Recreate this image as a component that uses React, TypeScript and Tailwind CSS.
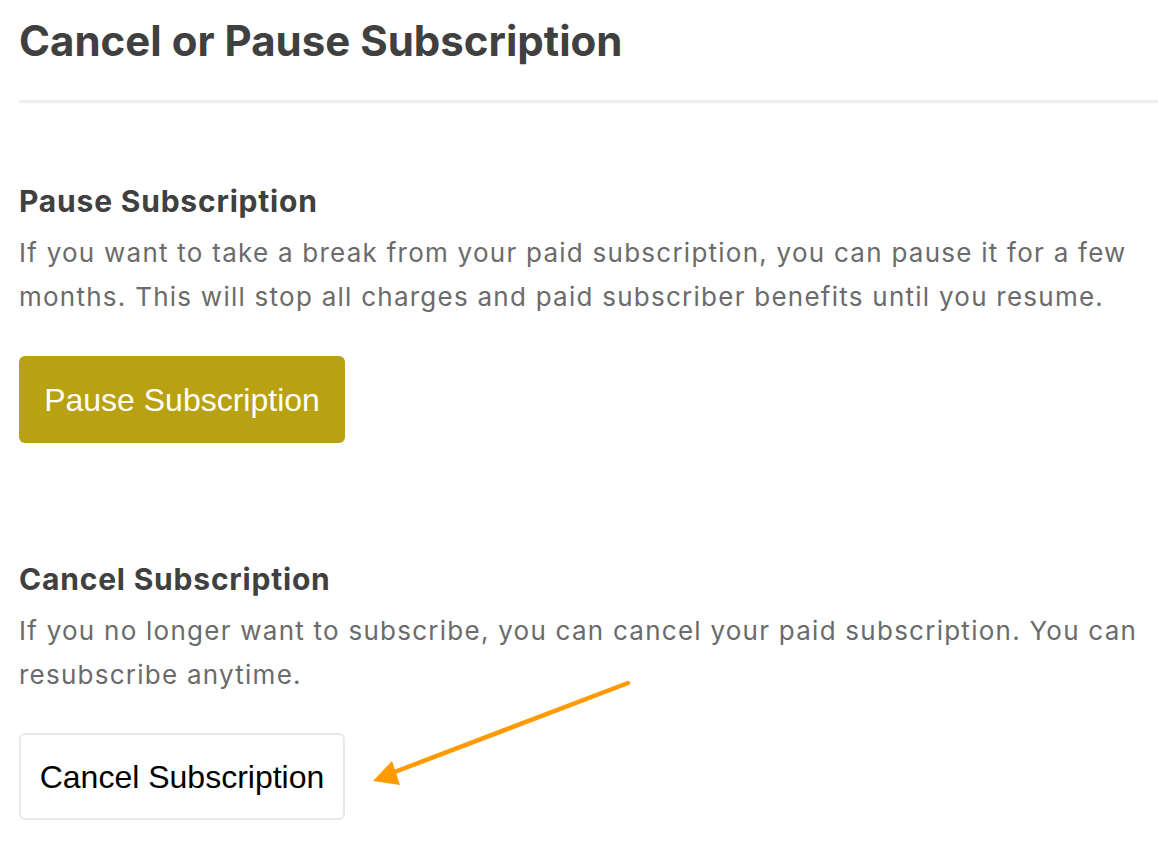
import React from 'react'

const sans = { fontFamily: 'Inter, "Noto Sans", sans-serif' }
const btn = { fontFamily: '"Liberation Sans", Arial, sans-serif' }

function Section({ title, children }: { title: string; children: React.ReactNode }) {
  return (
    <div>
      <h3 className="text-[30px] leading-[36px] font-bold tracking-[0.8px] text-[#404040]">{title}</h3>
      <p className="mt-[12px] text-[26px] leading-[44px] tracking-[1.25px] text-[#6b6b6b]">{children}</p>
    </div>
  )
}

export default function App() {
  return (
    <div className="relative min-h-[846px] w-[1158px] bg-white overflow-hidden" style={sans}>
      <div className="pl-[19px]">
        <h1 className="pt-[17px] text-[42px] leading-[48px] font-bold text-[#404040]">
          Cancel or Pause Subscription
        </h1>
        <div className="mt-[35px] h-[3px] bg-[#eeeeee]" />

        <div className="mt-[80px] pr-[16px]">
          <Section title="Pause Subscription">
            If you want to take a break from your paid subscription, you can pause it for a few
            months. This will stop all charges and paid subscriber benefits until you resume.
          </Section>
          <button
            className="block mt-[37px] w-[326px] h-[87px] rounded-[6px] bg-[#b9a212] text-white text-[32px]"
            style={btn}
          >
            Pause Subscription
          </button>
        </div>

        <div className="mt-[118px] pr-[16px]">
          <Section title="Cancel Subscription">
            If you no longer want to subscribe, you can cancel your paid subscription. You can
            resubscribe anytime.
          </Section>
          <button
            className="block mt-[36px] w-[326px] h-[87px] rounded-[6px] bg-white border-2 border-[#e8e8e8] text-black text-[32px]"
            style={btn}
          >
            Cancel Subscription
          </button>
        </div>
      </div>

      {/* annotation arrow */}
      <svg className="absolute left-0 top-0 pointer-events-none" width="1158" height="846">
        <line x1="628" y1="683" x2="392" y2="773" stroke="#ff9a00" strokeWidth="4.5" strokeLinecap="round" />
        <polygon points="373,781 392,761 400,785" fill="#ff9a00" />
      </svg>
    </div>
  )
}
